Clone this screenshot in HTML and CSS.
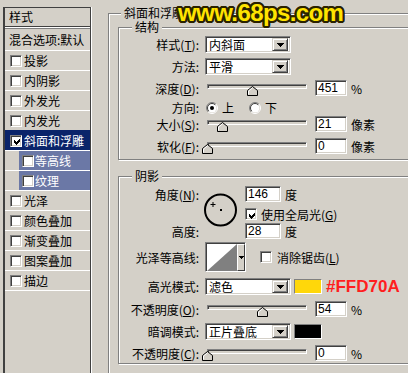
FILE: index.html
```html
<!DOCTYPE html>
<html>
<head>
<meta charset="utf-8">
<link rel="stylesheet" href="styles.css">
</head>
<body>
<div class="win">
  <div class="side">
    <div class="side-head">样式</div>
    <div class="side-blend">混合选项:默认</div>
    <div class="item"><span class="cb"></span>投影</div>
    <div class="item"><span class="cb"></span>内阴影</div>
    <div class="item"><span class="cb"></span>外发光</div>
    <div class="item"><span class="cb"></span>内发光</div>
    <div class="item sel"><span class="cb"><svg width="8" height="8" viewBox="0 0 8 8"><path d="M1 3h1v1h1v1h1v-1h1v-1h1v-1h1v3h-1v1h-1v1h-1v1h-1v-1h-1v-1h-1z" fill="#000"/></svg></span>斜面和浮雕</div>
    <div class="item sub"><div class="sub-in"><span class="cb"></span>等高线</div></div>
    <div class="item sub"><div class="sub-in"><span class="cb"></span>纹理</div></div>
    <div class="item"><span class="cb"></span>光泽</div>
    <div class="item"><span class="cb"></span>颜色叠加</div>
    <div class="item"><span class="cb"></span>渐变叠加</div>
    <div class="item"><span class="cb"></span>图案叠加</div>
    <div class="item"><span class="cb"></span>描边</div>
    <div class="item end"></div>
  </div>

  <div class="main">
    <div class="group outer">
      <div class="legend">斜面和浮雕</div>

      <div class="group inner g1">
        <div class="legend">结构</div>
        <div class="row r1">
          <div class="lbl">样式(<u>T</u>):</div>
          <div class="select"><span class="txt">内斜面</span><span class="btn"><svg width="7" height="4" viewBox="0 0 7 4"><path d="M0 0h7v1h-1v1h-1v1h-1v1h-1v-1h-1v-1h-1v-1h-1z" fill="#000"/></svg></span></div>
        </div>
        <div class="row r2">
          <div class="lbl">方法:</div>
          <div class="select"><span class="txt">平滑</span><span class="btn"><svg width="7" height="4" viewBox="0 0 7 4"><path d="M0 0h7v1h-1v1h-1v1h-1v1h-1v-1h-1v-1h-1v-1h-1z" fill="#000"/></svg></span></div>
        </div>
        <div class="row r3">
          <div class="lbl">深度(<u>D</u>):</div>
          <div class="slider"><div class="track"></div><span class="thumb" style="left:45px"><svg width="11" height="10" viewBox="0 0 11 10"><path d="M0.5 9.5V4.5L5.5 0.5L10.5 4.5V9.5Z" fill="#d4d0c8" stroke="#000"/><path d="M1.5 8.5V5L5.5 1.8" fill="none" stroke="#fff"/></svg></span></div>
          <div class="num">451</div><span class="unit">%</span>
        </div>
        <div class="row r4">
          <div class="lbl">方向:</div>
          <span class="radio"><svg width="12" height="12" viewBox="0 0 12 12"><circle cx="6" cy="6" r="4.5" fill="#fff"/><path d="M2.1 9.9A5.5 5.5 0 0 1 9.9 2.1" fill="none" stroke="#808080"/><path d="M9.9 2.1A5.5 5.5 0 0 1 2.1 9.9" fill="none" stroke="#fff"/><path d="M2.8 9.2A4.5 4.5 0 0 1 9.2 2.8" fill="none" stroke="#404040"/><circle cx="6" cy="6" r="2" fill="#000"/></svg></span><span class="rl">上</span>
          <span class="radio r-2"><svg width="12" height="12" viewBox="0 0 12 12"><circle cx="6" cy="6" r="4.5" fill="#fff"/><path d="M2.1 9.9A5.5 5.5 0 0 1 9.9 2.1" fill="none" stroke="#808080"/><path d="M9.9 2.1A5.5 5.5 0 0 1 2.1 9.9" fill="none" stroke="#fff"/><path d="M2.8 9.2A4.5 4.5 0 0 1 9.2 2.8" fill="none" stroke="#404040"/></svg></span><span class="rl">下</span>
        </div>
        <div class="row r5">
          <div class="lbl">大小(<u>S</u>):</div>
          <div class="slider"><div class="track"></div><span class="thumb" style="left:15px"><svg width="11" height="10" viewBox="0 0 11 10"><path d="M0.5 9.5V4.5L5.5 0.5L10.5 4.5V9.5Z" fill="#d4d0c8" stroke="#000"/><path d="M1.5 8.5V5L5.5 1.8" fill="none" stroke="#fff"/></svg></span></div>
          <div class="num">21</div><span class="unit">像素</span>
        </div>
        <div class="row r6">
          <div class="lbl">软化(<u>F</u>):</div>
          <div class="slider"><div class="track"></div><span class="thumb" style="left:0px"><svg width="11" height="10" viewBox="0 0 11 10"><path d="M0.5 9.5V4.5L5.5 0.5L10.5 4.5V9.5Z" fill="#d4d0c8" stroke="#000"/><path d="M1.5 8.5V5L5.5 1.8" fill="none" stroke="#fff"/></svg></span></div>
          <div class="num">0</div><span class="unit">像素</span>
        </div>
      </div>

      <div class="group inner g2">
        <div class="legend">阴影</div>
        <div class="angle">
          <div class="lbl a1">角度(<u>N</u>):</div>
          <svg class="dial" width="34" height="34" viewBox="0 0 34 34">
            <circle cx="16.5" cy="17" r="15.5" fill="none" stroke="#000" stroke-width="2"/>
            <rect x="16" y="16" width="2" height="2" fill="#000"/>
            <path d="M6.5 11.5h5M9 9v5" stroke="#000" stroke-width="1" fill="none"/>
          </svg>
          <div class="a-in1"><div class="num w36">146</div><span class="unit">度</span></div>
          <div class="a-cb"><span class="cb"><svg width="8" height="8" viewBox="0 0 8 8"><path d="M1 3h1v1h1v1h1v-1h1v-1h1v-1h1v3h-1v1h-1v1h-1v1h-1v-1h-1v-1h-1z" fill="#000"/></svg></span><span class="cbl">使用全局光(<u>G</u>)</span></div>
          <div class="lbl a3">高度:</div>
          <div class="a-in3"><div class="num w36">28</div><span class="unit">度</span></div>
        </div>
        <div class="row rc">
          <div class="lbl">光泽等高线:</div>
          <div class="contour">
            <svg class="cprev" width="30" height="26" viewBox="0 0 30 26" preserveAspectRatio="none"><rect width="30" height="26" fill="#fff"/><path d="M0 26L30 0V26Z" fill="#808080"/></svg>
            <span class="cbtn"><svg width="5" height="3" viewBox="0 0 5 3"><path d="M0 0h5v1h-1v1h-1v1h-1v-1h-1v-1h-1z" fill="#000"/></svg></span>
          </div>
          <span class="cb aa"></span><span class="cbl">消除锯齿(<u>L</u>)</span>
        </div>
        <div class="row rh">
          <div class="lbl">高光模式:</div>
          <div class="select"><span class="txt">滤色</span><span class="btn"><svg width="7" height="4" viewBox="0 0 7 4"><path d="M0 0h7v1h-1v1h-1v1h-1v1h-1v-1h-1v-1h-1v-1h-1z" fill="#000"/></svg></span></div>
          <span class="sw yellow"></span><span class="hex">#FFD70A</span>
        </div>
        <div class="row ro">
          <div class="lbl">不透明度(<u>O</u>):</div>
          <div class="slider"><div class="track"></div><span class="thumb" style="left:55px"><svg width="11" height="10" viewBox="0 0 11 10"><path d="M0.5 9.5V4.5L5.5 0.5L10.5 4.5V9.5Z" fill="#d4d0c8" stroke="#000"/><path d="M1.5 8.5V5L5.5 1.8" fill="none" stroke="#fff"/></svg></span></div>
          <div class="num">54</div><span class="unit">%</span>
        </div>
        <div class="row rs">
          <div class="lbl">暗调模式:</div>
          <div class="select"><span class="txt">正片叠底</span><span class="btn"><svg width="7" height="4" viewBox="0 0 7 4"><path d="M0 0h7v1h-1v1h-1v1h-1v1h-1v-1h-1v-1h-1v-1h-1z" fill="#000"/></svg></span></div>
          <span class="sw black"></span>
        </div>
        <div class="row rc2">
          <div class="lbl">不透明度(<u>C</u>):</div>
          <div class="slider"><div class="track"></div><span class="thumb" style="left:0px"><svg width="11" height="10" viewBox="0 0 11 10"><path d="M0.5 9.5V4.5L5.5 0.5L10.5 4.5V9.5Z" fill="#d4d0c8" stroke="#000"/><path d="M1.5 8.5V5L5.5 1.8" fill="none" stroke="#fff"/></svg></span></div>
          <div class="num">0</div><span class="unit">%</span>
        </div>
      </div>
    </div>
  </div>
</div>
<div class="watermark">www.68ps.com</div>
</body>
</html>
```

FILE: styles.css
```css
* { box-sizing: border-box; }

body {
  margin: 0;
  width: 408px;
  height: 373px;
  overflow: hidden;
  position: relative;
  background: #d4d0c8;
  color: #000;
  font-family: "Noto Sans CJK SC", sans-serif;
  font-size: 12px;
}

u { text-decoration: underline; text-underline-offset: 1px; }

.win { display: flex; align-items: flex-start; height: 373px; overflow: hidden; }

/* ---------- left style list ---------- */
.side {
  flex: none;
  margin: 7px 0 0 3px;
  width: 88px;
  height: 366px;
  border-top: 1px solid #404040;
  border-left: 2px solid #404040;
  border-right: 1px solid #404040;
  box-shadow: 1px 0 0 #fff;
}

.side-head {
  height: 19px;
  line-height: 18px;
  padding-left: 4px;
  border-bottom: 1px solid #404040;
  box-shadow: 0 1px 0 #fff, 0 2px 0 #808080;
}

.side-blend {
  margin-top: 2px;
  height: 21px;
  line-height: 21px;
  padding-left: 4px;
  white-space: nowrap;
}

.item {
  height: 20px;
  border-top: 1px solid #fff;
  display: flex;
  align-items: center;
  padding-left: 5px;
  white-space: nowrap;
}
.item .cb { margin-right: 2px; }
.item.sel { background: #0a246a; border-top-color: #0a246a; color: #fff; }
.item.sub { padding-left: 14px; align-items: stretch; }
.sub-in {
  flex: 1;
  display: flex;
  align-items: center;
  padding-left: 3px;
  background: #6b78a6;
  color: #fff;
}
.sub-in .cb { margin-right: 1px; }
.item.end { height: 1px; }

/* checkbox */
.cb {
  flex: none;
  width: 12px;
  height: 12px;
  background: #fff;
  border: 1px solid;
  border-color: #808080 #fff #fff #808080;
  box-shadow: inset 1px 1px 0 #404040, inset -1px -1px 0 #d4d0c8;
  display: inline-flex;
  align-items: center;
  justify-content: center;
}
.cb svg { display: block; margin: 1px 0 0 1px; }

/* ---------- right side ---------- */
.main { flex: none; margin: 13px 0 0 17px; }

.group {
  border: 1px solid #808080;
  box-shadow: inset 1px 1px 0 #fff, 1px 1px 0 #fff;
}
.outer { width: 320px; height: 360px; padding-left: 9px; border-bottom: none; }
.inner { width: 300px; }

.legend {
  display: table;
  height: 14px;
  line-height: 14px;
  margin-top: -8px;
  padding: 0 3px;
  background: #d4d0c8;
  white-space: nowrap;
}
.outer > .legend { margin-left: 3px; }
.inner > .legend { margin-left: 13px; }

.g1 { margin-top: 7px; padding-bottom: 5px; }
.g2 { margin-top: 16px; padding-bottom: 2px; }

.row { display: flex; align-items: center; white-space: nowrap; }
.lbl {
  flex: none;
  width: 82px;
  margin-right: 4px;
  padding-right: 2px;
  text-align: right;
  white-space: nowrap;
}

.r1 { margin-top: 2px; height: 17px; }
.r2 { margin-top: 5px; height: 17px; }
.r3 { margin-top: 5px; height: 16px; }
.r4 { margin-top: 4px; height: 15px; }
.r5 { margin-top: 1px; height: 16px; }
.r6 { margin-top: 6px; height: 16px; }

.rc  { margin-top: 3px; height: 30px; }
.rh  { margin-top: 6px; height: 17px; }
.ro  { margin-top: 6px; height: 16px; }
.rs  { margin-top: 6px; height: 17px; }
.rc2 { margin-top: 5px; height: 16px; }

/* select */
.select {
  flex: none;
  width: 86px;
  height: 17px;
  padding: 2px;
  display: flex;
  align-items: center;
  background: #fff;
  border: 1px solid;
  border-color: #808080 #fff #fff #808080;
  box-shadow: inset 1px 1px 0 #404040, inset -1px -1px 0 #d4d0c8;
}
.select .txt { flex: 1; padding-left: 1px; line-height: 13px; }
.btn {
  flex: none;
  width: 16px;
  height: 13px;
  display: flex;
  align-items: center;
  justify-content: center;
  background: #d4d0c8;
  border: 1px solid;
  border-color: #d4d0c8 #404040 #404040 #d4d0c8;
  box-shadow: inset 1px 1px 0 #fff, inset -1px -1px 0 #808080;
}
.btn svg { display: block; }

/* slider */
.slider { flex: none; position: relative; width: 100px; height: 16px; margin-left: 2px; }
.track {
  margin-top: 4px;
  height: 5px;
  border: 1px solid;
  border-color: #808080 #fff #fff #808080;
  box-shadow: inset 1px 1px 0 #404040;
}
.thumb { position: absolute; top: 6px; width: 11px; height: 10px; margin-left: -5px; }
.thumb svg { display: block; }

/* number field */
.num {
  flex: none;
  width: 32px;
  height: 16px;
  margin-left: 8px;
  padding: 0 2px;
  line-height: 14px;
  font-family: "Liberation Sans", sans-serif;
  font-size: 12px;
  background: #fff;
  border: 1px solid;
  border-color: #808080 #fff #fff #808080;
  box-shadow: inset 1px 1px 0 #404040, inset -1px -1px 0 #d4d0c8;
}
.num.w36 { width: 36px; margin-left: 0; }
.unit { margin-left: 4px; }

/* radio */
.radio { flex: none; width: 12px; height: 12px; margin-left: 1px; }
.radio svg { display: block; }
.radio.r-2 { margin-left: 15px; }
.rl { margin-left: 4px; }

/* angle block */
.angle {
  margin-top: 3px;
  display: grid;
  grid-template-columns: 82px 36px auto;
  grid-template-rows: 16px 5px 14px 2px 16px;
  column-gap: 4px;
}
.angle .lbl { margin-right: 0; align-self: center; }
.a1 { grid-column: 1; grid-row: 1; }
.a3 { grid-column: 1; grid-row: 5; }
.dial { grid-column: 2; grid-row: 1 / 6; margin: 7px 0 0 -1px; display: block; }
.a-in1 { grid-column: 3; grid-row: 1; display: flex; align-items: center; }
.a-in3 { grid-column: 3; grid-row: 5; display: flex; align-items: center; }
.a-cb { grid-column: 3; grid-row: 3; display: flex; align-items: center; white-space: nowrap; }
.a-cb .cbl { margin-left: 4px; }

/* contour */
.contour {
  flex: none;
  width: 41px;
  height: 30px;
  display: flex;
  border: 1px solid;
  border-color: #808080 #fff #fff #808080;
  box-shadow: inset 1px 1px 0 #404040;
  padding: 1px 0 0 1px;
}
.cprev { display: block; flex: none; width: 30px; height: 27px; }
.cbtn {
  flex: 1;
  display: flex;
  align-items: center;
  justify-content: center;
  background: #d4d0c8;
  border: 1px solid;
  border-color: #fff #404040 #404040 #fff;
}
.cbtn svg { display: block; }
.cb.aa { margin-left: 14px; }
.rc .cbl { margin-left: 5px; }

/* swatches */
.sw {
  flex: none;
  width: 28px;
  height: 15px;
  margin-left: 3px;
  border: 1px solid;
  border-color: #808080 #fff #fff #808080;
}
.sw.yellow { background: #ffd70a; }
.sw.black { background: #000; }
.hex {
  margin-left: 4px;
  color: #ff1e1e;
  font-family: "Liberation Sans", sans-serif;
  font-weight: bold;
  font-size: 17px;
  line-height: 17px;
}

/* watermark */
.watermark {
  position: absolute;
  left: 178px;
  top: -2px;
  font-family: "Liberation Sans", sans-serif;
  font-weight: bold;
  font-size: 24px;
  line-height: 30px;
  letter-spacing: -0.6px;
  color: #ffe400;
  text-shadow:
    -2px 0 0 #2a2200, 2px 0 0 #2a2200, 0 -2px 0 #2a2200, 0 2px 0 #2a2200,
    -1px -1px 0 #2a2200, 1px -1px 0 #2a2200, -1px 1px 0 #2a2200, 1px 1px 0 #2a2200,
    -2px -1px 0 #2a2200, 2px 1px 0 #2a2200, -1px 2px 0 #2a2200, 1px -2px 0 #2a2200,
    2px -1px 0 #2a2200, -2px 1px 0 #2a2200, 1px 2px 0 #2a2200, -1px -2px 0 #2a2200;
  white-space: nowrap;
}
```
